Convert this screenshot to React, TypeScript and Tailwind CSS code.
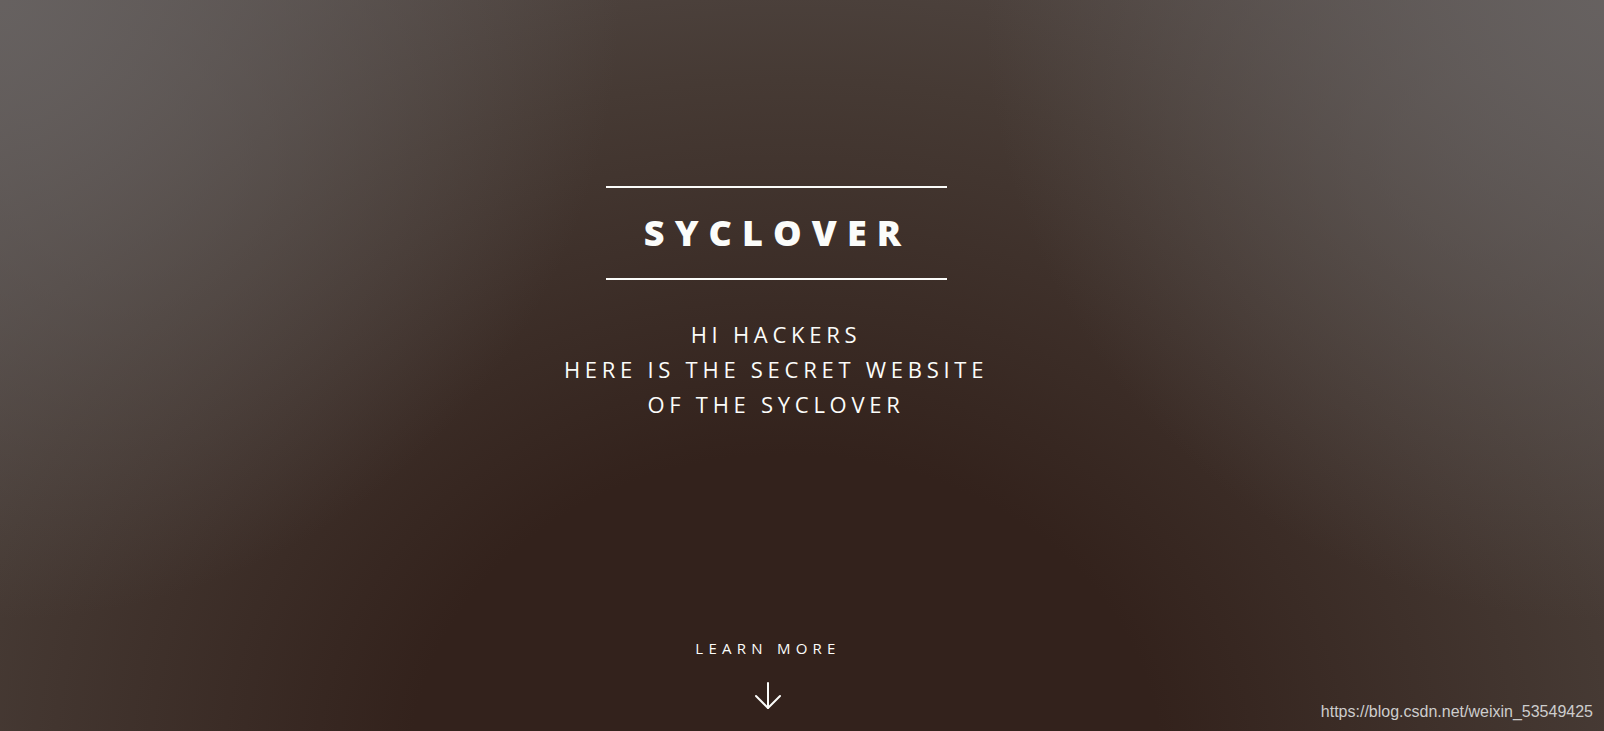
import React from "react";

const ArrowDown: React.FC = () => (
    <svg width="28" height="28" viewBox="0 0 28 28" fill="none" stroke="currentColor" strokeWidth="2" strokeLinecap="round" strokeLinejoin="round">
        <path d="M14 1v25" />
        <path d="M2 14l12 12 12-12" />
    </svg>
);

export default function App() {
    return (
        <div className="relative h-[731px] w-full overflow-hidden bg-[radial-gradient(circle_620px_at_0_0,rgba(103,98,97,0.95),rgba(103,98,97,0)),radial-gradient(circle_620px_at_100%_0,rgba(103,98,97,0.95),rgba(103,98,97,0)),radial-gradient(ellipse_1500px_1250px_at_49%_105%,#33221c_25%,#463a34_55%,#5c5553_85%)] font-['Open_Sans',sans-serif] text-[#fbfcfa]">
            <div className="flex w-[1552px] flex-col items-center pt-[186px]">
                <div className="flex h-[94px] w-[341px] items-center justify-center border-y-2 border-[#fbfcfa]">
                    <h1 className="pl-[3px] text-[36px] font-extrabold leading-none tracking-[0.28em]">SYCLOVER</h1>
                </div>

                <p className="mt-[37px] text-center text-[22px] leading-[35px] tracking-[0.215em]">
                    HI HACKERS
                    <br />
                    HERE IS THE SECRET WEBSITE
                    <br />
                    OF THE SYCLOVER
                </p>

                <div className="mr-[16px] mt-[216px] flex flex-col items-center">
                    <a href="#about" className="text-[15px] leading-[20px] tracking-[0.35em]">
                        LEARN MORE
                    </a>
                    <div className="mt-[24px]">
                        <ArrowDown />
                    </div>
                </div>
            </div>

            <span className="absolute bottom-[11px] right-[11px] font-['Liberation_Sans',Arial,sans-serif] text-[16px] leading-none text-[#cdcdcd]">
                https://blog.csdn.net/weixin_53549425
            </span>
        </div>
    );
}
